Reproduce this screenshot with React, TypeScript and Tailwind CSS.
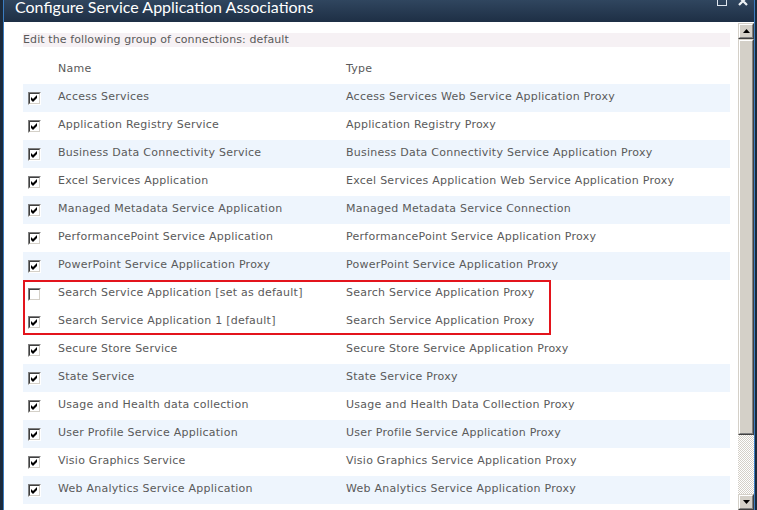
const rows: [string, string, boolean][] = [
  ['Access Services', 'Access Services Web Service Application Proxy', true],
  ['Application Registry Service', 'Application Registry Proxy', true],
  ['Business Data Connectivity Service', 'Business Data Connectivity Service Application Proxy', true],
  ['Excel Services Application', 'Excel Services Application Web Service Application Proxy', true],
  ['Managed Metadata Service Application', 'Managed Metadata Service Connection', true],
  ['PerformancePoint Service Application', 'PerformancePoint Service Application Proxy', true],
  ['PowerPoint Service Application Proxy', 'PowerPoint Service Application Proxy', true],
  ['Search Service Application [set as default]', 'Search Service Application Proxy', false],
  ['Search Service Application 1 [default]', 'Search Service Application Proxy', true],
  ['Secure Store Service', 'Secure Store Service Application Proxy', true],
  ['State Service', 'State Service Proxy', true],
  ['Usage and Health data collection', 'Usage and Health Data Collection Proxy', true],
  ['User Profile Service Application', 'User Profile Service Application Proxy', true],
  ['Visio Graphics Service', 'Visio Graphics Service Application Proxy', true],
  ['Web Analytics Service Application', 'Web Analytics Service Application Proxy', true],
  ['', '', false],
];

// rows 7 and 8 are both white in the shot
const shaded = (i: number) => (i === 8 ? false : i % 2 === 0);

function Checkbox({ checked }: { checked: boolean }) {
  return (
    <div className="w-[13px] h-[13px] border border-[#808080] border-r-white border-b-white">
      <div className="w-full h-full border border-[#404040] border-r-[#d4d0c8] border-b-[#d4d0c8] bg-white flex items-center justify-center">
        {checked && (
          <svg width="7" height="7" viewBox="0 0 7 7">
            <path d="M0 2 L2 4 L6 0 L6 3 L2 7 L0 5 Z" fill="#000" />
          </svg>
        )}
      </div>
    </div>
  );
}

function ScrollButton({ down }: { down?: boolean }) {
  return (
    <div className="h-[16px] w-full border border-[#d4d0c8] border-r-[#404040] border-b-[#404040] bg-[#d4d0c8]">
      <div className="h-full w-full border border-white border-r-[#808080] border-b-[#808080] flex items-center justify-center">
        <svg width="7" height="4" viewBox="0 0 7 4">
          <path d={down ? 'M0 0 H7 L3.5 4 Z' : 'M3.5 0 L7 4 H0 Z'} fill="#000" />
        </svg>
      </div>
    </div>
  );
}

export default function App() {
  return (
    <div className="w-[757px] h-[510px] overflow-hidden flex bg-[#1b2a3c] font-['DejaVu_Sans',sans-serif]">
      <div className="w-[3px] shrink-0" />
      <div className="w-px shrink-0 bg-[#3b7cc0]" />
      <div className="flex-1 flex flex-col min-w-0">
        <div className="h-[22px] shrink-0 bg-gradient-to-b from-[#30465f] to-[#1e2f45] flex items-start justify-between pl-[11px] pr-[6px] overflow-hidden">
          <span className="text-white text-[16px] leading-[18px] font-['Lato',sans-serif] -mt-[2px]">
            Configure Service Application Associations
          </span>
          <div className="flex gap-[11px] -translate-y-[4px]">
            <div className="w-[10px] h-[10px] border border-[#dfe6ee]" />
            <svg width="10" height="10" viewBox="0 0 10 10">
              <path d="M1 1 L9 9 M9 1 L1 9" stroke="#eef2f6" strokeWidth="2.2" />
            </svg>
          </div>
        </div>
        <div className="flex-1 flex bg-white min-h-0">
          <div className="flex-1 pl-[19px] pr-[8px] pt-[11px] text-[11px] tracking-[0.25px] text-[#5a5a5a]">
            <div className="h-[14px] bg-[#f6f1f4] leading-[14px] tracking-[0.1px]">Edit the following group of connections: default</div>
            <div className="mt-[9px] h-[28px] grid grid-cols-[35px_288px_1fr] items-center pb-[2px]">
              <span />
              <span>Name</span>
              <span>Type</span>
            </div>
            <div className="relative">
              {rows.map(([name, type, checked], i) => (
                <div
                  key={i}
                  className={`h-[28px] grid grid-cols-[35px_288px_1fr] items-center ${shaded(i) ? 'bg-[#eef5fd]' : 'bg-white'}`}
                >
                  <div className="pl-[5px]">{name && <Checkbox checked={checked} />}</div>
                  <span className="-translate-y-px whitespace-nowrap">{name}</span>
                  <span className="-translate-y-px whitespace-nowrap">{type}</span>
                </div>
              ))}
              <div className="absolute left-0 top-[196px] w-[528px] h-[55px] border-2 border-[#e3141c]" />
            </div>
          </div>
          <div className="w-[16px] shrink-0 flex flex-col pt-px">
            <ScrollButton />
            <div className="h-[396px] border border-[#d4d0c8] border-r-[#404040] border-b-[#404040] bg-[#d4d0c8]">
              <div className="h-full border border-white border-r-[#808080] border-b-[#808080]" />
            </div>
            <div className="flex-1 bg-[repeating-conic-gradient(#d4d0c8_0_25%,#fff_0_50%)] bg-[length:2px_2px]" />
            <ScrollButton down />
          </div>
        </div>
      </div>
      <div className="w-px shrink-0 bg-[#3b7cc0]" />
      <div className="w-[2px] shrink-0" />
    </div>
  );
}
